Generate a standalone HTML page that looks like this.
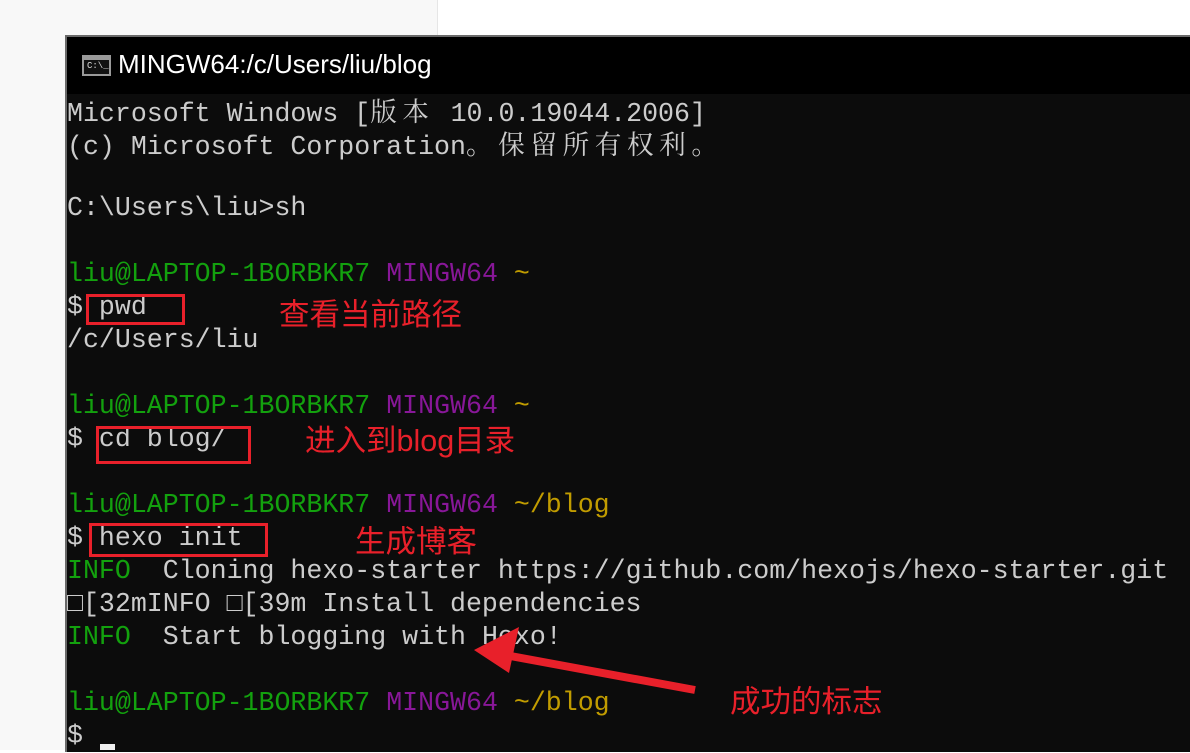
<!DOCTYPE html>
<html><head><meta charset="utf-8"><style>
body{margin:0;width:1190px;height:750px;overflow:hidden;background:#fff;position:relative;font-family:"Liberation Sans",sans-serif}
.lp{position:absolute;left:0;top:0;width:437px;height:750px;background:#f8f8f8;border-right:1px solid #e6e6e6}
.win{position:absolute;left:65px;top:35px;width:1125px;height:715px;background:#0c0c0c;border-left:2px solid #6a6a6a;border-top:2px solid #6a6a6a}
.title{position:absolute;left:0;top:0;right:0;height:57px;background:#000;color:#fff;font-size:26px}
.title span{position:absolute;left:51px;top:12px}
.ico{position:absolute;left:15px;top:18px;width:29px;height:21px;border:2px solid #9a9a9a;background:#111;box-sizing:border-box}
.ico:before{content:"";position:absolute;left:0;right:0;top:0;height:3px;background:#9a9a9a}
.ico i{position:absolute;left:3px;top:4px;color:#ddd;font-size:9px;font-style:normal;font-family:"Liberation Mono",monospace}
.l{position:absolute;font-family:"Liberation Mono","Noto Serif CJK SC",monospace;font-size:26.6px;color:#cccccc;white-space:pre;line-height:33px;height:33px}
.c{letter-spacing:5.6px;font-family:"Noto Serif CJK SC",serif}
.g{color:#13a10e}.p{color:#881798}.y{color:#c19c00}
.box{position:absolute;border:3px solid #e8202a;box-sizing:border-box}
.ann{position:absolute;color:#e8202a;font-size:30.5px;font-family:"Liberation Sans","Noto Sans CJK SC",sans-serif;line-height:32px;white-space:nowrap}
.cur{position:absolute;left:100px;top:744px;width:15px;height:6px;background:#f0f0f0}
</style></head><body>
<div class="lp"></div>
<div class="win">
<div class="title"><div class="ico"><i>C:\_</i></div><span>MINGW64:/c/Users/liu/blog</span></div>
</div>
<div style="position:absolute;left:0;top:-1px">
<div class="l" style="top:94px;left:67px">Microsoft Windows [<span class="c">版本</span> 10.0.19044.2006]</div>
<div class="l" style="top:127px;left:67px">(c) Microsoft Corporation<span class="c">。保留所有权利。</span></div>
<div class="l" style="top:193px;left:67px">C:\Users\liu&gt;sh</div>
<div class="l" style="top:259px;left:67px"><span class="g">liu@LAPTOP-1BORBKR7</span> <span class="p">MINGW64</span> <span class="y">~</span></div>
<div class="l" style="top:292px;left:67px">$ pwd</div>
<div class="l" style="top:325px;left:67px">/c/Users/liu</div>
<div class="l" style="top:391px;left:67px"><span class="g">liu@LAPTOP-1BORBKR7</span> <span class="p">MINGW64</span> <span class="y">~</span></div>
<div class="l" style="top:424px;left:67px">$ cd blog/</div>
<div class="l" style="top:490px;left:67px"><span class="g">liu@LAPTOP-1BORBKR7</span> <span class="p">MINGW64</span> <span class="y">~/blog</span></div>
<div class="l" style="top:523px;left:67px">$ hexo init</div>
<div class="l" style="top:556px;left:67px"><span class="g">INFO</span>  Cloning hexo-starter https://github.com/hexojs/hexo-starter.git</div>
<div class="l" style="top:589px;left:67px">□[32mINFO □[39m Install dependencies</div>
<div class="l" style="top:622px;left:67px"><span class="g">INFO</span>  Start blogging with Hexo!</div>
<div class="l" style="top:688px;left:67px"><span class="g">liu@LAPTOP-1BORBKR7</span> <span class="p">MINGW64</span> <span class="y">~/blog</span></div>
<div class="l" style="top:721px;left:67px">$</div>
</div>
<div class="cur"></div>
<div class="box" style="left:86px;top:294px;width:99px;height:31px"></div>
<div class="box" style="left:96px;top:426px;width:155px;height:38px"></div>
<div class="box" style="left:89px;top:523px;width:179px;height:34px"></div>
<div class="ann" style="left:279px;top:299px">查看当前路径</div>
<div class="ann" style="left:305px;top:425px">进入到blog目录</div>
<div class="ann" style="left:355px;top:526px">生成博客</div>
<div class="ann" style="left:730px;top:686px">成功的标志</div>
<svg style="position:absolute;left:0;top:0" width="1190" height="750">
<line x1="695" y1="690" x2="505" y2="655" stroke="#e8202a" stroke-width="8"/>
<polygon points="474,650 519,627 509,673" fill="#e8202a"/>
</svg>
</body></html>
